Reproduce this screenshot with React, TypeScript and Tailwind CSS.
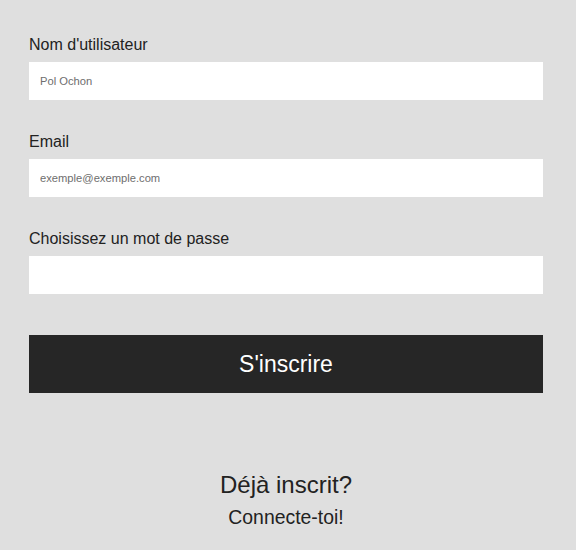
import React from "react";

const font = { fontFamily: '"Liberation Sans", Arial, Helvetica, sans-serif' };

function Field({ label, placeholder, type = "text", first = false }: { label: string; placeholder?: string; type?: string; first?: boolean }) {
  return (
    <div className={first ? "flex flex-col" : "mt-[33px] flex flex-col"}>
      <label className="text-[16px] leading-[18px] text-[#222222]">{label}</label>
      <input
        type={type}
        placeholder={placeholder}
        className="mt-[8px] h-[38px] w-full bg-white px-[11px] text-[11.2px] text-[#333333] outline-none placeholder:text-[#6e6e6e]"
        style={font}
      />
    </div>
  );
}

export default function App() {
  return (
    <div className="min-h-[550px] w-full bg-[#dfdfdf] pl-[29px] pr-[33px] pt-[36px]" style={font}>
      <form className="flex flex-col" onSubmit={(e) => e.preventDefault()}>
        <Field label="Nom d'utilisateur" placeholder="Pol Ochon" first />
        <Field label="Email" placeholder="exemple@exemple.com" type="email" />
        <Field label="Choisissez un mot de passe" type="password" />
        <button
          type="submit"
          className="mt-[41px] h-[58px] w-full bg-[#262626] text-[23px] leading-[56px] text-white"
          style={font}
        >
          S'inscrire
        </button>
      </form>
      <div className="mt-[78px] flex flex-col items-center text-[#222222]">
        <h2 className="text-[24px] leading-[28px] font-normal">Déjà inscrit?</h2>
        <a className="mt-[7px] text-[19.4px] leading-[22px]">Connecte-toi!</a>
      </div>
    </div>
  );
}
